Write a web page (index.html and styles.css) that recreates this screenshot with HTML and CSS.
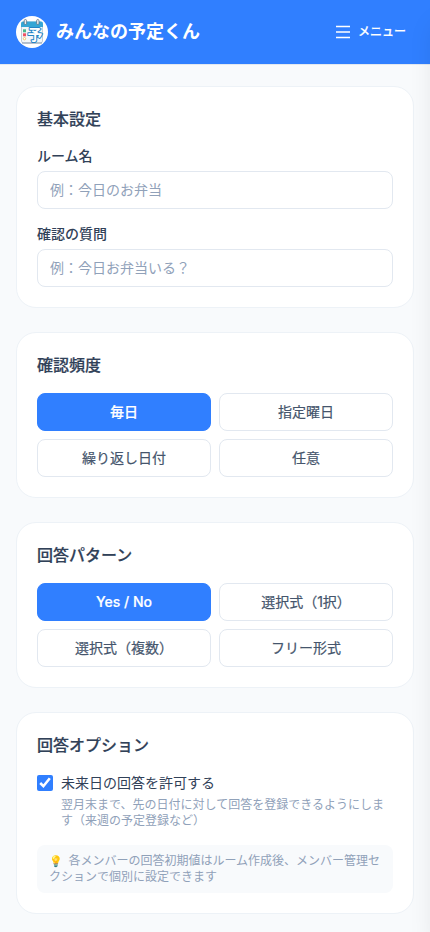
FILE: index.html
```html
<!DOCTYPE html>
<html lang="ja">
<head>
<meta charset="utf-8">
<meta name="viewport" content="width=device-width, initial-scale=1">
<title>みんなの予定くん</title>
<link rel="stylesheet" href="styles.css">
</head>
<body>
<header class="header">
  <div class="brand">
    <svg class="logo" viewBox="0 0 32 32" aria-hidden="true">
      <circle cx="16" cy="16" r="16" fill="#fff"/>
      <rect x="5.5" y="6" width="21" height="21" rx="2" fill="#f3f7fa" stroke="#b4c0cc" stroke-width=".8"/>
      <path d="M5 11V7.500q0-2 2-2h18q2 0 2 2V11z" fill="#35a6d5"/>
      <path d="M6 27h20" stroke="#8d9caf" stroke-width="1"/>
      <rect x="8.2" y="3.500" width="2.400" height="5" rx="1.200" fill="#e8edf1" stroke="#526579" stroke-width=".7"/>
      <rect x="20.600" y="3.500" width="2.400" height="5" rx="1.200" fill="#e8edf1" stroke="#526579" stroke-width=".7"/>
      <rect x="7" y="13.300" width="3" height="3" fill="#49b98b"/>
      <rect x="7" y="17.300" width="3" height="3" fill="#ef5261"/>
      <circle cx="8.500" cy="22.700" r="1.200" fill="#fff" stroke="#efbd55" stroke-width=".8"/>
      <text class="logo-text" x="11.500" y="23.500">予</text>
    </svg>
    <span class="brand-name">みんなの予定くん</span>
  </div>
  <button class="menu" type="button">
    <svg class="menu-icon" viewBox="0 0 14 16" aria-hidden="true"><path d="M0 2.500h14M0 8h14M0 13.500h14"/></svg>
    <span>メニュー</span>
  </button>
</header>
<main class="content">
  <section class="card">
    <h2>基本設定</h2>
    <div class="field">
      <label for="room">ルーム名</label>
      <input class="input" id="room" type="text" placeholder="例：今日のお弁当">
    </div>
    <div class="field">
      <label for="question">確認の質問</label>
      <input class="input" id="question" type="text" placeholder="例：今日お弁当いる？">
    </div>
  </section>
  <section class="card">
    <h2>確認頻度</h2>
    <div class="choices">
      <button class="choice selected" type="button">毎日</button>
      <button class="choice" type="button">指定曜日</button>
      <button class="choice" type="button">繰り返し日付</button>
      <button class="choice" type="button">任意</button>
    </div>
  </section>
  <section class="card">
    <h2>回答パターン</h2>
    <div class="choices">
      <button class="choice selected" type="button">Yes / No</button>
      <button class="choice" type="button">選択式（1択）</button>
      <button class="choice" type="button">選択式（複数）</button>
      <button class="choice" type="button">フリー形式</button>
    </div>
  </section>
  <section class="card">
    <h2>回答オプション</h2>
    <div>
      <label class="check"><input type="checkbox" checked><span>未来日の回答を許可する</span></label>
      <p class="help">翌月末まで、先の日付に対して回答を登録できるようにします（来週の予定登録など）</p>
    </div>
    <p class="note"><span class="bulb">💡</span> 各メンバーの回答初期値はルーム作成後、メンバー管理セクションで個別に設定できます</p>
  </section>
</main>
<aside class="drawer"></aside>
</body>
</html>
```

FILE: styles.css
```css
* { box-sizing: border-box; margin: 0; }
html { overflow: hidden; }
body {
  background: #f8fafc;
  color: #314158;
  font-family: Inter, "Noto Sans CJK JP", sans-serif;
  font-size: 16px;
  line-height: 24px;
}
button, input { font: inherit; }
.header {
  display: flex;
  align-items: center;
  justify-content: space-between;
  height: 65px;
  padding: 0 16px;
  background: #307fff;
  border-bottom: 1px solid #e2e8f0;
}
.brand { display: flex; align-items: center; gap: 8px; }
.logo { width: 32px; height: 32px; }
.logo-text {
  font-size: 15px;
  font-weight: 700;
  fill: #fff;
  stroke: #2584c4;
  stroke-width: 2px;
  stroke-linejoin: round;
  paint-order: stroke;
}
.brand-name { color: #fff; font-size: 18px; font-weight: 700; line-height: 28px; }
.menu {
  display: flex;
  align-items: center;
  gap: 8px;
  padding: 8px;
  border: 0;
  background: none;
  color: #fff;
  font-size: 12px;
  font-weight: 500;
  line-height: 16px;
  -webkit-text-stroke: .2px;
}
.menu-icon { width: 14px; height: 16px; fill: none; stroke: #fff; stroke-width: 1.5; }
.content { display: flex; flex-direction: column; gap: 24px; padding: 21px 16px; }
.card {
  display: flex;
  flex-direction: column;
  gap: 16px;
  padding: 20px;
  background: #fff;
  border: 1px solid #edf2f7;
  border-radius: 20px;
}
h2 { font-size: 16px; font-weight: 500; line-height: 24px; -webkit-text-stroke: .2px; }
.field { display: flex; flex-direction: column; gap: 4px; font-size: 14px; line-height: 20px; }
.field label { height: 20px; line-height: 18px; font-weight: 500; }
.input {
  width: 100%;
  height: 38px;
  padding: 7px 12px 9px;
  border: 1px solid #e2e8f0;
  border-radius: 8px;
  background: #fff;
}
.input::placeholder { color: #90a1b9; }
.choices { display: grid; grid-template-columns: 1fr 1fr; gap: 8px; }
.choice {
  height: 38px;
  padding: 8px 12px;
  border: 1px solid #e2e8f0;
  border-radius: 8px;
  background: #fff;
  color: #45556c;
  font-size: 14px;
  font-weight: 400;
  line-height: 20px;
  -webkit-text-stroke: .2px;
}
.choice.selected { background: #307fff; border-color: #307fff; color: #fff; font-weight: 500; -webkit-text-stroke: .2px; }
.check { display: flex; align-items: center; gap: 8px; font-size: 14px; line-height: 20px; }
.check input { width: 16px; height: 16px; margin: 0; accent-color: #307fff; }
.help { margin: 4px 0 0 24px; color: #90a1b9; font-size: 12px; line-height: 16px; }
.note { padding: 8px 12px; border-radius: 8px; background: #f8fafc; color: #90a1b9; font-size: 12px; line-height: 16px; }
.bulb { display: inline-block; width: 16px; font-size: 11px; line-height: 14px; filter: hue-rotate(-12deg); }
.drawer {
  position: fixed;
  top: 0;
  left: 100%;
  width: 288px;
  height: 100%;
  background: #fff;
  box-shadow: 0 20px 25px -5px rgb(0 0 0 / .1);
}
```
